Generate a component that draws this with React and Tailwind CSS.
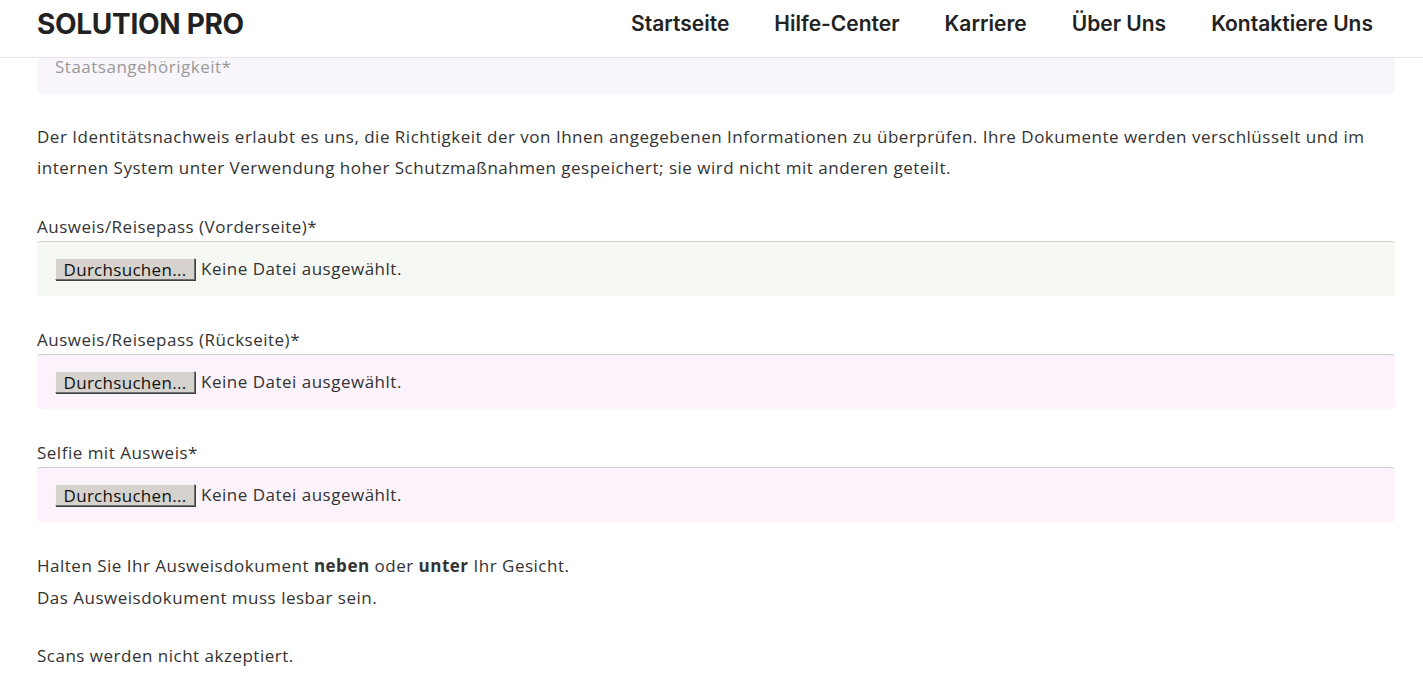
import React from "react";

const navLinks = ["Startseite", "Hilfe-Center", "Karriere", "Über Uns", "Kontaktiere Uns"];

function FileField({ label, tint }) {
  return (
    <div className="mt-[30px]">
      <label className="block leading-[28px]">{label}</label>
      <div className={`h-[55px] rounded-[4px] border-t border-[#cfcfcf] ${tint} pl-[18px] flex items-center`}>
        <button
          type="button"
          className="h-[22px] w-[140px] bg-[#d6d3ce] text-[#111] text-[17px] tracking-[0.3px] leading-none border border-t-[#f4f4f4] border-l-[#f4f4f4] border-r-[#6f6f6f] border-b-[#6f6f6f] shadow-[1px_1px_0_#404040]"
        >
          Durchsuchen...
        </button>
        <span className="ml-[6px]">Keine Datei ausgewählt.</span>
      </div>
    </div>
  );
}

export default function App() {
  return (
    <div
      className="min-h-screen bg-white text-[#333] text-[17px] tracking-[0.5px]"
      style={{ fontFamily: "'Open Sans', sans-serif" }}
    >
      <header className="fixed top-0 inset-x-0 z-10 h-[58px] bg-white border-b border-[#ece2ea] px-[37px] pb-[10px] flex items-center justify-between tracking-normal">
        <div className="text-[28px] font-bold tracking-[-0.3px] text-[#222] leading-none" style={{ fontFamily: "Inter, sans-serif" }}>
          SOLUTION PRO
        </div>
        <nav className="flex gap-[45px] pr-[13px] text-[21px] font-semibold text-[#222]" style={{ fontFamily: "Inter, sans-serif" }}>
          {navLinks.map((item) => (
            <a key={item} href="#">
              {item}
            </a>
          ))}
        </nav>
      </header>

      <main className="px-[37px] pt-[39px] pr-[28px] pb-10">
        <div className="h-[55px] rounded-[4px] border-t border-[#cfcfcf] bg-[#f8f6fa] pl-[18px] flex items-center text-[#999]">
          Staatsangehörigkeit*
        </div>

        <p className="mt-[27px] leading-[31px]">
          Der Identitätsnachweis erlaubt es uns, die Richtigkeit der von Ihnen angegebenen Informationen zu überprüfen. Ihre Dokumente werden verschlüsselt und im internen System unter Verwendung hoher Schutzmaßnahmen gespeichert; sie wird nicht mit anderen geteilt.
        </p>

        <FileField label="Ausweis/Reisepass (Vorderseite)*" tint="bg-[#f6f8f3]" />
        <FileField label="Ausweis/Reisepass (Rückseite)*" tint="bg-[#fbf2fb]" />
        <FileField label="Selfie mit Ausweis*" tint="bg-[#fbf2fb]" />

        <p className="mt-[28px] leading-[32px]">
          Halten Sie Ihr Ausweisdokument <strong>neben</strong> oder <strong>unter</strong> Ihr Gesicht.
          <br />
          Das Ausweisdokument muss lesbar sein.
        </p>
        <p className="mt-[26px] leading-[32px]">Scans werden nicht akzeptiert.</p>
      </main>
    </div>
  );
}
